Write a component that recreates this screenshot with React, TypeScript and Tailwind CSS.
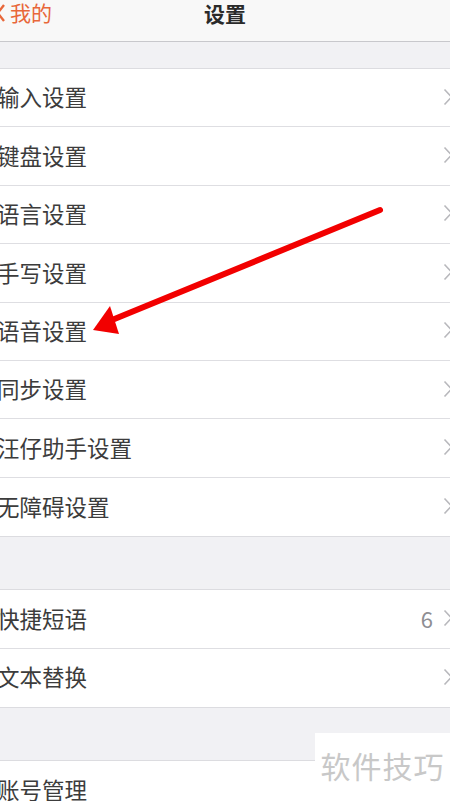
import React from 'react';

const font = { fontFamily: '"Noto Sans CJK SC", "Noto Sans", sans-serif' };

const Chevron: React.FC = () => (
  <svg width="10" height="18" viewBox="0 0 10 18" className="shrink-0 -mr-[3px]">
    <path d="M1.5 1.5 L8.5 9 L1.5 16.5" fill="none" stroke="#b8b8bc" strokeWidth="1.6" />
  </svg>
);

const Row: React.FC<{ label: string; value?: string; last?: boolean }> = ({ label, value, last }) => (
  <div className={`h-[58.4px] flex items-center justify-between pb-[2px] ${last ? '' : 'border-b border-[#dedee2]'}`}>
    <span className="-ml-[3px] text-[22.5px] text-[#3c3c3c] leading-none">{label}</span>
    <div className="flex items-center gap-[10px]">
      {value && <span className="text-[22px] text-[#8e8e93] leading-none">{value}</span>}
      <Chevron />
    </div>
  </div>
);

const Section: React.FC<{ items: { label: string; value?: string }[] }> = ({ items }) => (
  <div className="bg-white border-y border-[#dcdce0]">
    {items.map((it, i) => (
      <Row key={it.label} label={it.label} value={it.value} last={i === items.length - 1} />
    ))}
  </div>
);

const App: React.FC = () => {
  return (
    <div className="relative w-[450px] h-[801px] overflow-hidden bg-[#f1f1f4]" style={font}>
      {/* nav bar */}
      <div className="h-[42px] bg-[#f8f8f8] border-b border-[#c8c8cc] relative">
        <div className="absolute left-0 top-[2px] flex items-center text-[#e8673a] text-[21px] leading-none">
          <svg width="10" height="20" viewBox="0 0 10 20" className="-ml-[4px]">
            <path d="M8 2 L1.8 10 L8 18" fill="none" stroke="#e8673a" strokeWidth="2.4" />
          </svg>
          <span className="ml-[4px]">我的</span>
        </div>
        <div className="absolute left-0 right-0 top-[3px] text-center text-[21px] font-bold text-[#2a2a2a] leading-none">
          设置
        </div>
      </div>

      <div className="h-[26px]" />
      <Section
        items={[
          { label: '输入设置' },
          { label: '键盘设置' },
          { label: '语言设置' },
          { label: '手写设置' },
          { label: '语音设置' },
          { label: '同步设置' },
          { label: '汪仔助手设置' },
          { label: '无障碍设置' },
        ]}
      />
      <div className="h-[52px]" />
      <Section items={[{ label: '快捷短语', value: '6' }, { label: '文本替换' }]} />
      <div className="h-[52px]" />
      <Section items={[{ label: '账号管理' }]} />

      {/* annotation arrow */}
      <svg className="absolute left-0 top-0 pointer-events-none" width="450" height="801">
        <line x1="380" y1="210" x2="112" y2="320" stroke="#f20000" strokeWidth="6" strokeLinecap="round" />
        <polygon points="93,330 110,306 119,334" fill="#f20000" />
      </svg>

      {/* watermark */}
      <div className="absolute left-[315px] top-[733px] right-0 bottom-0 bg-white flex items-start justify-center pt-[17px]">
        <span className="text-[30px] text-[#c8c8c8] leading-none tracking-[1px]">软件技巧</span>
      </div>
    </div>
  );
};

export default App;
